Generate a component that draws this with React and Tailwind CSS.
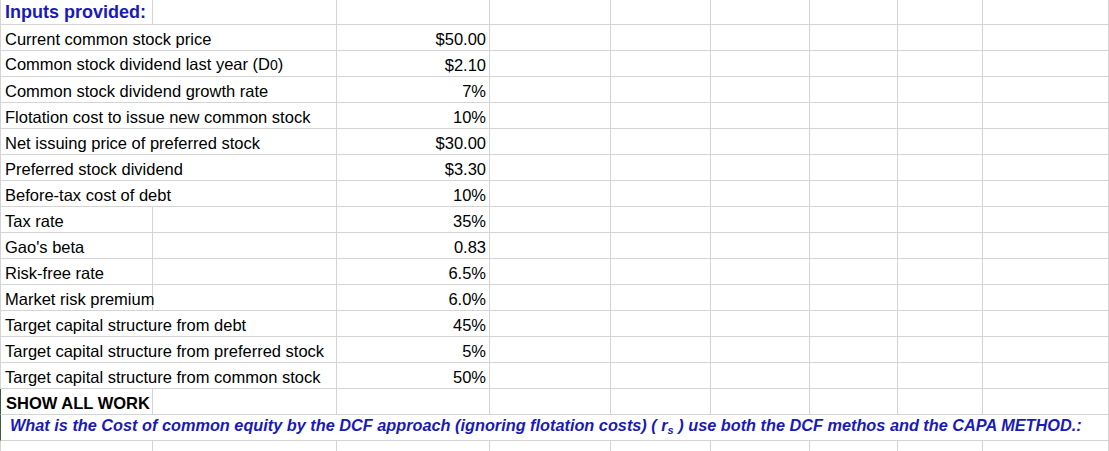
import React from 'react'

const line = 'border-[#d4d4d4]'

const rows = [
  { label: 'Current common stock price', value: '$50.00', wide: true },
  { label: <>Common stock dividend last year (D<span className="text-[14px]">0</span>)</>, value: '$2.10', wide: true },
  { label: 'Common stock dividend growth rate', value: '7%', wide: true },
  { label: 'Flotation cost to issue new common stock', value: '10%', wide: true },
  { label: 'Net issuing price of preferred stock', value: '$30.00', wide: true },
  { label: 'Preferred stock dividend', value: '$3.30', wide: true },
  { label: 'Before-tax cost of debt', value: '10%', wide: true },
  { label: 'Tax rate', value: '35%' },
  { label: "Gao's beta", value: '0.83' },
  { label: 'Risk-free rate', value: '6.5%' },
  { label: 'Market risk premium', value: '6.0%' },
  { label: 'Target capital structure from debt', value: '45%', wide: true },
  { label: 'Target capital structure from preferred stock', value: '5%', wide: true },
  { label: 'Target capital structure from common stock', value: '50%', wide: true },
]

function Cell({ className = '', children }) {
  return (
    <div className={`border-r border-b ${line} flex items-end overflow-visible whitespace-nowrap ${className}`}>
      {children}
    </div>
  )
}

// empty cells for columns D..I
function Rest({ h = 'h-[26px]' }) {
  return (
    <>
      {[0, 1, 2, 3, 4, 5].map(i => <Cell key={i} className={h} />)}
    </>
  )
}

export default function App() {
  return (
    <div className="w-[1109px] h-[451px] overflow-hidden bg-white text-black text-[16.5px] font-['Liberation_Sans',Arial,sans-serif]">
      <div className="grid grid-cols-[153px_184px_153px_121px_100px_99px_88px_85px_1fr]">
        {/* heading */}
        <Cell className={`h-[25px] border-l ${line}`}>
          <span className="pl-[4px] leading-[24px] text-[18px] font-bold text-[#1a1ab8]">Inputs provided:</span>
        </Cell>
        <Cell className="h-[25px]" />
        <Cell className="h-[25px]" />
        <Rest h="h-[25px]" />

        {rows.map((r, i) => (
          <React.Fragment key={i}>
            {r.wide ? (
              <Cell className={`col-span-2 h-[26px] border-l ${line}`}>
                <span className="pl-[4px] leading-[22px]">{r.label}</span>
              </Cell>
            ) : (
              <>
                <Cell className={`h-[26px] border-l ${line}`}>
                  <span className="pl-[4px] leading-[22px]">{r.label}</span>
                </Cell>
                <Cell className="h-[26px]" />
              </>
            )}
            <Cell className="h-[26px] justify-end">
              <span className="pr-[3px] leading-[22px]">{r.value}</span>
            </Cell>
            <Rest />
          </React.Fragment>
        ))}

        {/* show all work */}
        <Cell className="h-[26px] border-l border-l-[#3c5a3c]">
          <span className="pl-[5px] leading-[22px] font-bold">SHOW ALL WORK</span>
        </Cell>
        <Cell className="h-[26px]" />
        <Cell className="h-[26px]" />
        <Rest />

        {/* question */}
        <Cell className="col-span-9 h-[26px] border-l border-l-[#3c5a3c]">
          <span className="pl-[9px] leading-[19px] text-[16.3px] font-bold italic text-[#1a1ab8]">
            What is the Cost of common equity by the DCF approach (ignoring flotation costs) ( r<span className="text-[11px] align-[-3px]">s</span> ) use both the DCF methos and the CAPA METHOD.:
          </span>
        </Cell>

        {/* trailing partial row */}
        <Cell className={`h-[26px] border-l ${line}`} />
        <Cell className="h-[26px]" />
        <Cell className="h-[26px]" />
        <Rest />
      </div>
    </div>
  )
}
